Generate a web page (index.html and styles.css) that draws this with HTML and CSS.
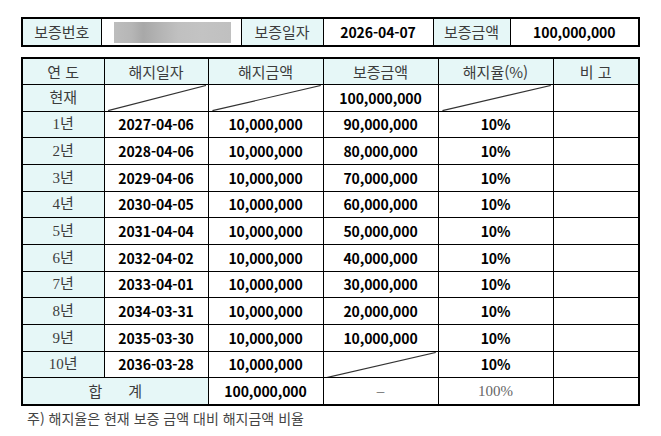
FILE: index.html
```html
<!DOCTYPE html>
<html lang="ko">
<head>
<meta charset="utf-8">
<link rel="stylesheet" href="styles.css">
</head>
<body>
<div class="page">
  <div class="box box-top">
    <table class="grid">
      <colgroup>
        <col style="width:78px"><col style="width:140px"><col style="width:82px"><col style="width:110px"><col style="width:77px"><col style="width:128px">
      </colgroup>
      <tr>
        <td class="th">보증번호</td>
        <td><div class="blur"></div></td>
        <td class="th">보증일자</td>
        <td class="num">2026-04-07</td>
        <td class="th">보증금액</td>
        <td class="num">100,000,000</td>
      </tr>
    </table>
  </div>

  <div class="box box-main">
    <table class="grid main">
      <colgroup>
        <col style="width:81px"><col style="width:104px"><col style="width:115px"><col style="width:115px"><col style="width:115px"><col style="width:85px">
      </colgroup>
      <tr class="head">
        <td class="th">연 도</td>
        <td class="th">해지일자</td>
        <td class="th">해지금액</td>
        <td class="th">보증금액</td>
        <td class="th">해지율(%)</td>
        <td class="th">비 고</td>
      </tr>
      <tr>
        <td class="th yr">현재</td>
        <td class="diag"><svg viewBox="0 0 100 100" preserveAspectRatio="none"><line x1="3" y1="100" x2="98" y2="2" /></svg></td>
        <td class="diag"><svg viewBox="0 0 100 100" preserveAspectRatio="none"><line x1="3" y1="100" x2="98" y2="2" /></svg></td>
        <td class="num">100,000,000</td>
        <td class="diag"><svg viewBox="0 0 100 100" preserveAspectRatio="none"><line x1="3" y1="100" x2="98" y2="2" /></svg></td>
        <td></td>
      </tr>
      <tr><td class="th yr">1년</td><td class="num">2027-04-06</td><td class="num">10,000,000</td><td class="num">90,000,000</td><td class="num">10%</td><td></td></tr>
      <tr><td class="th yr">2년</td><td class="num">2028-04-06</td><td class="num">10,000,000</td><td class="num">80,000,000</td><td class="num">10%</td><td></td></tr>
      <tr><td class="th yr">3년</td><td class="num">2029-04-06</td><td class="num">10,000,000</td><td class="num">70,000,000</td><td class="num">10%</td><td></td></tr>
      <tr><td class="th yr">4년</td><td class="num">2030-04-05</td><td class="num">10,000,000</td><td class="num">60,000,000</td><td class="num">10%</td><td></td></tr>
      <tr><td class="th yr">5년</td><td class="num">2031-04-04</td><td class="num">10,000,000</td><td class="num">50,000,000</td><td class="num">10%</td><td></td></tr>
      <tr><td class="th yr">6년</td><td class="num">2032-04-02</td><td class="num">10,000,000</td><td class="num">40,000,000</td><td class="num">10%</td><td></td></tr>
      <tr><td class="th yr">7년</td><td class="num">2033-04-01</td><td class="num">10,000,000</td><td class="num">30,000,000</td><td class="num">10%</td><td></td></tr>
      <tr><td class="th yr">8년</td><td class="num">2034-03-31</td><td class="num">10,000,000</td><td class="num">20,000,000</td><td class="num">10%</td><td></td></tr>
      <tr><td class="th yr">9년</td><td class="num">2035-03-30</td><td class="num">10,000,000</td><td class="num">10,000,000</td><td class="num">10%</td><td></td></tr>
      <tr>
        <td class="th yr">10년</td>
        <td class="num">2036-03-28</td>
        <td class="num">10,000,000</td>
        <td class="diag"><svg viewBox="0 0 100 100" preserveAspectRatio="none"><line x1="2" y1="100" x2="98" y2="2" /></svg></td>
        <td class="num">10%</td>
        <td></td>
      </tr>
      <tr>
        <td class="th total" colspan="2">합<span class="gap"></span>계</td>
        <td class="num">100,000,000</td>
        <td class="muted">–</td>
        <td class="muted">100%</td>
        <td></td>
      </tr>
    </table>
  </div>

  <p class="note">주) 해지율은 현재 보증 금액 대비 해지금액 비율</p>
</div>
</body>
</html>
```

FILE: styles.css
```css
html, body {
  margin: 0;
  padding: 0;
  background: #fff;
}

.page {
  padding: 17px 0 0 21px;
  width: 619px;
  font-family: "Noto Sans CJK KR", sans-serif;
}

.box {
  border: 2px solid #000;
}

.box-main {
  margin-top: 10px;
}

.grid {
  width: 100%;
  border-collapse: collapse;
  table-layout: fixed;
}

.grid td {
  border: 1px solid #000;
  padding: 0;
  text-align: center;
  vertical-align: middle;
  height: 26px;
  line-height: 16px;
  color: #000;
  font-size: 14px;
}

.grid tr:first-child td { border-top: 0; }
.grid tr:last-child td { border-bottom: 0; }
.grid td:first-child { border-left: 0; }
.grid td:last-child { border-right: 0; }

.main td {
  height: 25.67px;
}

.main .head td {
  height: 25px;
}

.grid td.th {
  background: #e6f7f7;
  color: #3c3c3c;
  font-family: "Noto Sans CJK KR", sans-serif;
  font-weight: 400;
  font-size: 15px;
}

.grid td.yr {
  font-family: "Liberation Serif", "Noto Sans CJK KR", serif;
  font-size: 15px;
}

.num {
  font-weight: 700;
  font-family: "Noto Sans CJK KR", sans-serif;
  letter-spacing: -0.1px;
}

.grid td.muted {
  color: #666;
  font-family: "Liberation Serif", serif;
  font-size: 15px;
}

.gap {
  display: inline-block;
  width: 26px;
}

.blur {
  margin: 0 10px 0 12px;
  height: 21px;
  background: linear-gradient(90deg, #bdbdbd 0%, #b6b6b6 15%, #a8a8a8 25%, #b3b3b3 38%, #c0c0c0 55%, #c3c3c3 75%, #c0c0c0 100%);
}

.diag {
  position: relative;
}

.diag svg {
  position: absolute;
  inset: 0;
  width: 100%;
  height: 100%;
  display: block;
}

.diag line {
  stroke: #333;
  stroke-width: 1.2;
  vector-effect: non-scaling-stroke;
}

.note {
  margin: 3px 0 0 6px;
  font-size: 14px;
  line-height: 18px;
  color: #444;
}
```
